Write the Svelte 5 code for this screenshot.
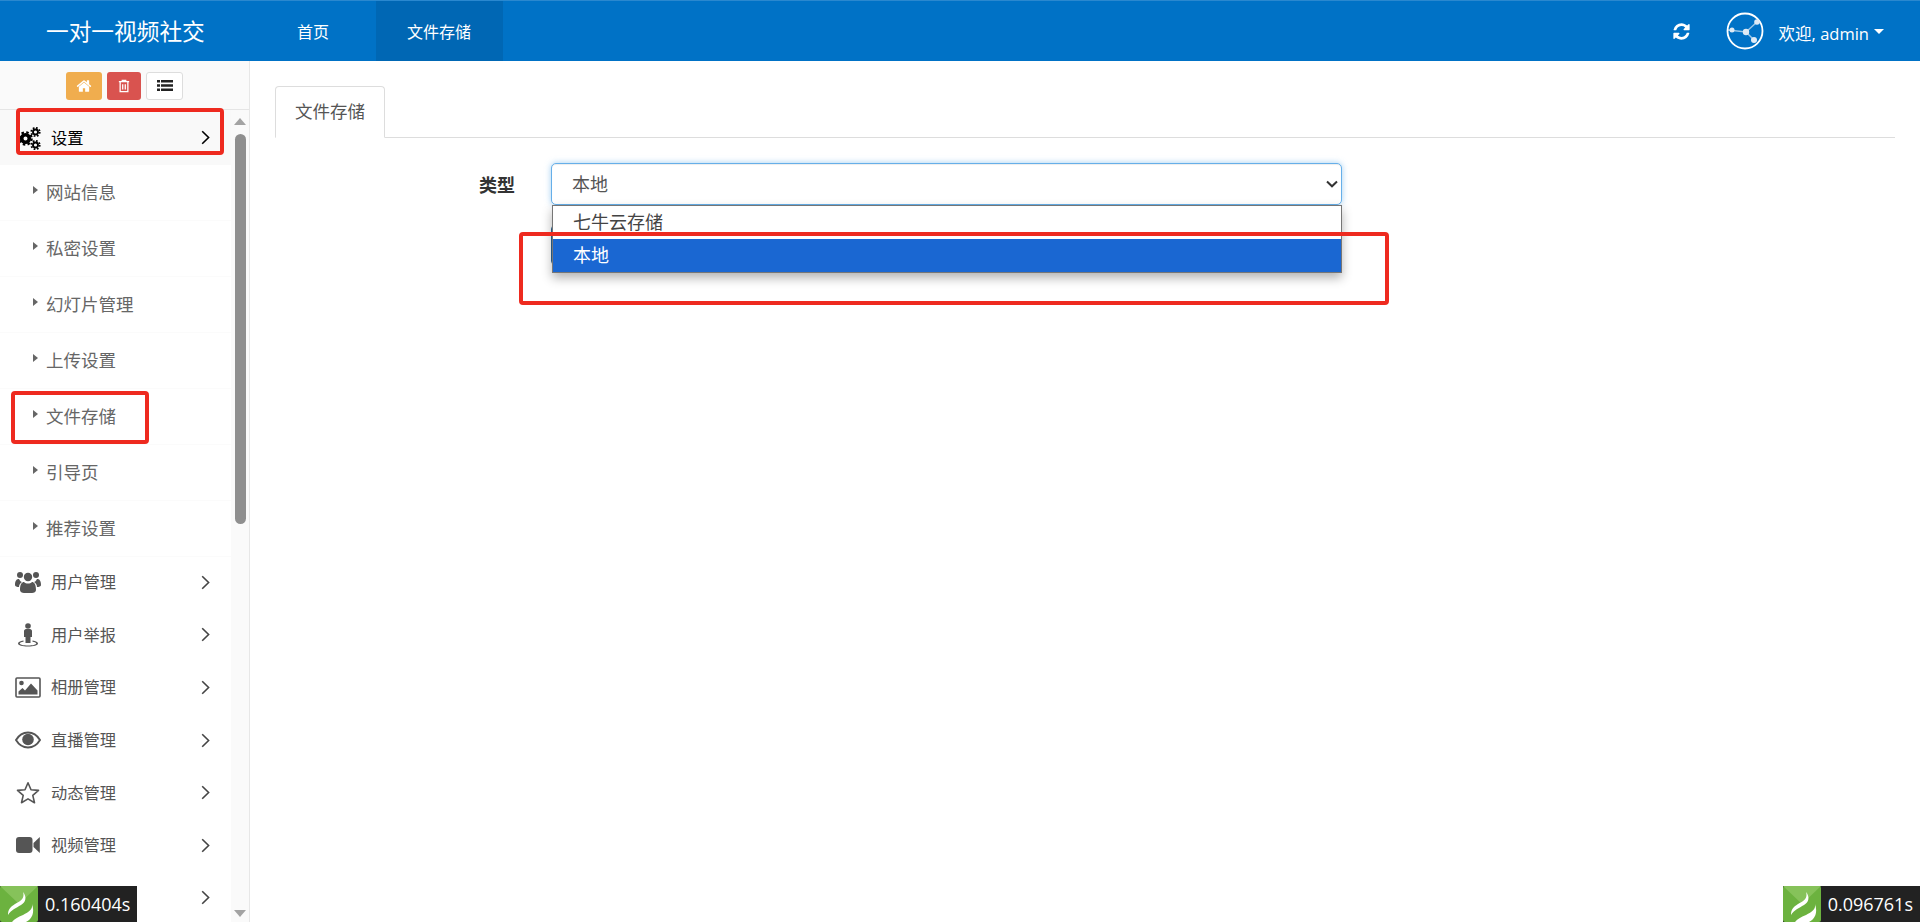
<script>
    const navLinks = [
        { label: '首页', active: false },
        { label: '文件存储', active: true },
    ];

    const subItems = ['网站信息', '私密设置', '幻灯片管理', '上传设置', '文件存储', '引导页', '推荐设置'];

    const menuItems = [
        { id: 'users', label: '用户管理' },
        { id: 'report', label: '用户举报' },
        { id: 'album', label: '相册管理' },
        { id: 'live', label: '直播管理' },
        { id: 'star', label: '动态管理' },
        { id: 'video', label: '视频管理' },
        { id: 'more', label: '' },
    ];

    const refreshPath = 'M1639 1056q0 5-1 7-64 268-268 434.500t-478 166.500q-146 0-282.500-55t-243.500-157l-129 129q-19 19-45 19t-45-19-19-45v-448q0-26 19-45t45-19h448q26 0 45 19t19 45-19 45l-137 137q71 66 161 102t187 36q134 0 250-65t186-179q11-17 53-117 8-23 30-23h192q13 0 22.500 9.500t9.500 22.500zm25-800v448q0 26-19 45t-45 19h-448q-26 0-45-19t-19-45 19-45l138-138q-148-137-349-137-134 0-250 65t-186 179q-11 17-53 117-8 23-30 23h-199q-13 0-22.500-9.500t-9.500-22.500v-7q65-268 270-434.500t480-166.500q146 0 284 55.500t245 156.500l130-129q19-19 45-19t45 19 19 45z';
    const homePath = 'M1472 992v480q0 26-19 45t-45 19h-384v-384h-256v384h-384q-26 0-45-19t-19-45v-480q0-1 .5-3t.5-3l575-474 575 474q1 2 1 6zm223-69l-62 74q-8 9-21 11h-3q-13 0-21-7l-692-577-692 577q-12 8-24 7-13-2-21-11l-62-74q-8-10-7-23.500t11-21.500l719-599q32-26 76-26t76 26l244 204v-195q0-14 9-23t23-9h192q14 0 23 9t9 23v408l219 182q10 8 11 21.500t-7 23.500z';
</script>

{#snippet chevron()}
    <svg class="chevron" viewBox="0 0 9 15" width="9" height="15"><path d="M1.200 1.200 7.600 7.500 1.200 13.800" fill="none" stroke="currentColor" stroke-width="1.600" /></svg>
{/snippet}

{#snippet flame()}
    <svg class="flame" viewBox="0 0 38 36" width="38" height="36">
        <rect width="38" height="36" rx="2" fill="#6cb23f" />
        <path d="M0 0h38L19 18z" fill="#86c25a" />
        <path d="M23 6c2 6-2 9-8 12-5 3-7 6-7 11 3-5 8-7 13-10 5-3 6-8 2-13z" fill="#fff" />
        <path d="M32 18c1 5-3 8-9 11-5 2-9 4-11 7h14c6-3 9-9 6-18z" fill="#fff" />
    </svg>
{/snippet}

<div class="page">
    <header class="navbar">
        <div class="brand">一对一视频社交</div>
        <nav class="nav-links">
            {#each navLinks as link}
                <span class="nav-link" class:active={link.active}>{link.label}</span>
            {/each}
        </nav>
        <div class="nav-right">
            <svg class="refresh" viewBox="0 0 1792 1792" width="19" height="19"><path d={refreshPath} fill="#fff" /></svg>
            <svg class="avatar" viewBox="0 0 38 38" width="38" height="38">
                <circle cx="19" cy="19" r="17.500" fill="none" stroke="#fff" stroke-width="1.800" />
                <path d="M2 18 20 20 31 10M20 20 28 28" fill="none" stroke="#fff" stroke-opacity=".6" stroke-width="1.500" />
                <circle cx="6" cy="18" r="2.500" fill="#dfeaf5" />
                <circle cx="20" cy="20" r="3.200" fill="#dfeaf5" />
                <circle cx="31" cy="10" r="2.800" fill="#dfeaf5" />
                <circle cx="28" cy="28" r="3" fill="#dfeaf5" />
            </svg>
            <span class="welcome">欢迎, admin</span>
            <span class="caret"></span>
        </div>
    </header>

    <div class="body">
        <aside class="sidebar">
            <div class="shortcuts">
                <span class="sc-btn orange">
                    <svg viewBox="0 0 1792 1792" width="16" height="16"><path d={homePath} fill="#fff" /></svg>
                </span>
                <span class="sc-btn red">
                    <svg viewBox="0 0 14 16" width="12" height="14">
                        <path d="M1 3h12M5 3V1.500h4V3M2.500 3v11.500h9V3M5.500 6v6M8.500 6v6" fill="none" stroke="#fff" stroke-width="1.500" />
                    </svg>
                </span>
                <span class="sc-btn white">
                    <svg viewBox="0 0 16 14" width="16" height="14">
                        <path d="M0 1h3v2.500H0zM4 1h12v2.500H4zM0 5.200h3v2.500H0zM4 5.200h12v2.500H4zM0 9.400h3v2.500H0zM4 9.400h12v2.500H4z" fill="#222" />
                    </svg>
                </span>
            </div>

            <div class="menu-wrap">
                <div class="menu">
                    <div class="menu-item open">
                        <span class="menu-icon">
                            <svg viewBox="0 0 26 24" width="26" height="24" fill="none" stroke="#000">
                                <circle cx="10.500" cy="12.500" r="3.800" stroke-width="3.600" />
                                <circle cx="10.500" cy="12.500" r="6.200" stroke-width="2.200" stroke-dasharray="2.500 2.370" />
                                <circle cx="20.500" cy="6" r="2.500" stroke-width="1.900" />
                                <circle cx="20.500" cy="6" r="4.200" stroke-width="1.800" stroke-dasharray="1.700 1.600" />
                                <circle cx="20.500" cy="19" r="2.500" stroke-width="1.900" />
                                <circle cx="20.500" cy="19" r="4.200" stroke-width="1.800" stroke-dasharray="1.700 1.600" />
                            </svg>
                        </span>
                        <span class="menu-label">设置</span>
                        {@render chevron()}
                    </div>

                    {#each subItems as sub}
                        <div class="sub-item">
                            <span class="sub-arrow"></span>
                            <span class="sub-label">{sub}</span>
                        </div>
                    {/each}

                    {#each menuItems as item}
                        <div class="menu-item">
                            <span class="menu-icon">
                                {#if item.id === 'users'}
                                    <svg viewBox="0 0 26 24" width="26" height="24" fill="#555">
                                        <circle cx="5" cy="5" r="3" /><circle cx="21" cy="5" r="3" /><circle cx="13" cy="7" r="4.200" />
                                        <path d="M0 15c0-5 2-6 4-6 1 2 2 3 3 3-2 1-3 3-3 5-2 0-4-.500-4-2zM26 15c0-5-2-6-4-6-1 2-2 3-3 3 2 1 3 3 3 5 2 0 4-.500 4-2z" />
                                        <path d="M5 20c0-6 2-8 4-8 2 2 6 2 8 0 2 0 4 2 4 8 0 2-2 3-4 3H9c-2 0-4-1-4-3z" />
                                    </svg>
                                {:else if item.id === 'report'}
                                    <svg viewBox="0 0 22 24" width="22" height="24" fill="#555">
                                        <circle cx="11" cy="3" r="2.800" />
                                        <path d="M7 8c0-1 1-2 2-2h4c1 0 2 1 2 2v6h-1.500v6h-5v-6H7z" />
                                        <path d="M6.500 17.500C3 18 1 19 1 20.500 1 22.500 5.500 23.500 11 23.500s10-1 10-3c0-1.500-2-2.500-5.500-3v1.300c2.500.4 3.800 1 3.800 1.700 0 1-3.500 2-8.300 2s-8.300-1-8.300-2c0-.7 1.300-1.300 3.800-1.700z" />
                                    </svg>
                                {:else if item.id === 'album'}
                                    <svg viewBox="0 0 26 21" width="26" height="21" fill="#555">
                                        <rect x="1" y="1" width="24" height="19" rx="1" fill="none" stroke="#555" stroke-width="1.600" />
                                        <circle cx="6.500" cy="6" r="2.300" />
                                        <path d="M3.500 17.500v-3l4-3.500 2.500 2.500 6-7 6.500 7v4z" />
                                    </svg>
                                {:else if item.id === 'live'}
                                    <svg viewBox="0 0 26 18" width="26" height="18" fill="#555">
                                        <path d="M1 9C4 4 8 1.500 13 1.500S22 4 25 9c-3 5-7 7.500-12 7.500S4 14 1 9z" fill="none" stroke="#555" stroke-width="1.900" />
                                        <circle cx="13" cy="8.500" r="5.800" />
                                    </svg>
                                {:else if item.id === 'star'}
                                    <svg viewBox="0 0 24 23" width="24" height="23">
                                        <path d="M12 1.800 15 8.700 22.500 9.400 16.800 14.400 18.500 21.700 12 17.900 5.500 21.700 7.200 14.400 1.500 9.400 9 8.700z" fill="none" stroke="#555" stroke-width="1.600" stroke-linejoin="round" />
                                    </svg>
                                {:else if item.id === 'video'}
                                    <svg viewBox="0 0 24 16" width="24" height="16" fill="#555">
                                        <rect x="0" y="0" width="16.500" height="16" rx="3" /><path d="M17.500 6 23.800 0v16L17.500 10z" />
                                    </svg>
                                {:else}
                                    <svg viewBox="0 0 24 20" width="24" height="20"><circle cx="12" cy="6" r="5" fill="#555" /></svg>
                                {/if}
                            </span>
                            <span class="menu-label">{item.label}</span>
                            {@render chevron()}
                        </div>
                    {/each}
                </div>

                <div class="scrollbar">
                    <span class="sb-up"></span>
                    <span class="sb-thumb"></span>
                    <span class="sb-space"></span>
                    <span class="sb-down"></span>
                </div>
            </div>
        </aside>

        <main class="content">
            <div class="tabs">
                <span class="tab">文件存储</span>
            </div>
            <div class="form-row">
                <span class="form-label">类型</span>
                <div class="field">
                    <select class="form-select">
                        <option>本地</option>
                    </select>
                    <svg class="select-arrow" viewBox="0 0 12 8" width="12" height="8"><path d="M1 1.500 6 6.300 11 1.500" fill="none" stroke="#333" stroke-width="2" /></svg>
                    <div class="behind"></div>
                    <div class="dropdown">
                        <div class="option">七牛云存储</div>
                        <div class="option selected">本地</div>
                    </div>
                </div>
            </div>
        </main>
    </div>

    <div class="mark mark-settings"></div>
    <div class="mark mark-storage"></div>
    <div class="mark mark-select"></div>

    <div class="timer timer-left">{@render flame()}<span>0.160404s</span></div>
    <div class="timer timer-right">{@render flame()}<span>0.096761s</span></div>
</div>

<style>
    :global(body) {
        margin: 0;
        background: #fff;
    }

    .page {
        position: relative;
        width: 1920px;
        height: 922px;
        overflow: hidden;
        display: flex;
        flex-direction: column;
        font-family: "Open Sans", "Noto Sans CJK SC", sans-serif;
        color: #555;
    }

    .navbar {
        height: 61px;
        flex-shrink: 0;
        box-sizing: border-box;
        border-top: 1px solid #2a88cf;
        background: #0072c6;
        color: #fff;
        display: flex;
        align-items: stretch;
    }

    .brand {
        width: 249px;
        box-sizing: border-box;
        padding-left: 46px;
        font-size: 22.700px;
        line-height: 61px;
        flex-shrink: 0;
    }

    .nav-links {
        display: flex;
    }

    .nav-link {
        padding: 0 32px 0 31px;
        font-size: 16px;
        line-height: 62px;
    }

    .nav-link:first-child {
        padding-left: 48px;
        padding-right: 47px;
    }

    .nav-link.active {
        background: #0067b4;
    }

    .nav-right {
        margin-left: auto;
        display: flex;
        align-items: center;
        padding-right: 36px;
    }

    .refresh {
        margin-right: 35px;
        margin-left: -1px;
    }

    .avatar {
        margin-right: 15px;
    }

    .welcome {
        font-size: 16.500px;
        margin-top: 3px;
    }

    .caret {
        margin-left: 5px;
        border-left: 5px solid transparent;
        border-right: 5px solid transparent;
        border-top: 5px solid #fff;
    }

    .body {
        flex: 1;
        min-height: 0;
        display: flex;
    }

    .sidebar {
        width: 250px;
        flex-shrink: 0;
        box-sizing: border-box;
        border-right: 1px solid #e7e7e7;
        display: flex;
        flex-direction: column;
    }

    .shortcuts {
        height: 49px;
        flex-shrink: 0;
        box-sizing: border-box;
        background: #fafafa;
        border-bottom: 1px solid #e5e5e5;
        padding: 11px 0 0 66px;
        display: flex;
        align-items: flex-start;
        gap: 5px;
    }

    .sc-btn {
        height: 28px;
        box-sizing: border-box;
        border-radius: 3px;
        display: flex;
        align-items: center;
        justify-content: center;
    }

    .orange {
        width: 36px;
        background: #f0ad4e;
    }

    .red {
        width: 34px;
        background: #d9534f;
    }

    .white {
        width: 37px;
        background: #fff;
        border: 1px solid #ddd;
    }

    .menu-wrap {
        flex: 1;
        min-height: 0;
        display: flex;
    }

    .menu {
        width: 231px;
        flex-shrink: 0;
        overflow: hidden;
    }

    .menu-item {
        height: 52.600px;
        box-sizing: border-box;
        padding: 0 21px 2px 15px;
        display: flex;
        align-items: center;
        font-size: 16.250px;
    }

    .menu-item.open {
        height: 55px;
        padding-bottom: 0;
        background: #f9f9f9;
        color: #000;
    }

    .menu-icon {
        width: 26px;
        margin-right: 10px;
        display: flex;
        justify-content: center;
        align-items: center;
    }

    .menu-label {
        flex: 1;
        margin-top: -2px;
    }

    .chevron {
        color: #444;
        flex-shrink: 0;
    }

    .open .chevron {
        color: #000;
    }

    .sub-item {
        height: 56px;
        box-sizing: border-box;
        border-bottom: 1px solid #fbfbfb;
        padding-left: 33px;
        display: flex;
        align-items: center;
        font-size: 17.500px;
        color: #666;
    }

    .sub-label {
        margin-top: -3px;
        margin-left: -1px;
    }

    .sub-arrow {
        margin-right: 9px;
        margin-top: -5px;
        border-top: 4px solid transparent;
        border-bottom: 4px solid transparent;
        border-left: 5px solid #666;
    }

    .scrollbar {
        flex: 1;
        background: #fafafa;
        display: flex;
        flex-direction: column;
        align-items: center;
    }

    .sb-up {
        margin-top: 8px;
        border-left: 6.500px solid transparent;
        border-right: 6.500px solid transparent;
        border-bottom: 7px solid #a3a3a3;
    }

    .sb-thumb {
        width: 11px;
        height: 390px;
        margin-top: 9px;
        border-radius: 6px;
        background: #8f8f8f;
    }

    .sb-space {
        flex: 1;
    }

    .sb-down {
        margin-bottom: 5px;
        border-left: 6.500px solid transparent;
        border-right: 6.500px solid transparent;
        border-top: 7px solid #a3a3a3;
    }

    .content {
        flex: 1;
        min-width: 0;
        padding: 25px 25px 0;
    }

    .tabs {
        height: 52px;
        box-sizing: border-box;
        border-bottom: 1px solid #ddd;
        display: flex;
    }

    .tab {
        width: 110px;
        height: 52px;
        box-sizing: border-box;
        border: 1px solid #ddd;
        border-bottom-color: #fff;
        border-radius: 4px 4px 0 0;
        background: #fff;
        font-size: 17.500px;
        line-height: 48px;
        text-align: center;
    }

    .form-row {
        margin-top: 25px;
        display: flex;
        align-items: flex-start;
    }

    .form-label {
        width: 276px;
        box-sizing: border-box;
        padding-right: 36px;
        text-align: right;
        font-size: 18px;
        font-weight: 700;
        color: #333;
        line-height: 45px;
    }

    .field {
        position: relative;
        width: 791px;
    }

    .form-select {
        display: block;
        width: 100%;
        height: 42px;
        box-sizing: border-box;
        padding: 0 20px;
        border: 1px solid #66afe9;
        border-radius: 5px;
        background-color: #fff;
        box-shadow: inset 0 1px 1px rgba(0, 0, 0, 0.075), 0 0 6px rgba(102, 175, 233, 0.6);
        font-family: inherit;
        font-size: 18px;
        color: #555;
        outline: none;
        appearance: none;
    }

    .select-arrow {
        position: absolute;
        right: 4px;
        top: 17px;
    }

    .behind {
        position: absolute;
        left: 0;
        top: 62px;
        width: 20px;
        height: 40px;
        box-sizing: border-box;
        border: 1px solid #2a6496;
        border-radius: 4px;
    }

    .dropdown {
        position: absolute;
        left: 1px;
        right: 0;
        top: 42px;
        box-sizing: border-box;
        border: 1px solid #767676;
        background: #fff;
        box-shadow: 0 5px 10px rgba(0, 0, 0, 0.3);
    }

    .option {
        height: 33px;
        padding-left: 20px;
        font-size: 18px;
        line-height: 33px;
        color: #444;
    }

    .option.selected {
        background: #1a67d2;
        color: #fff;
    }

    .mark {
        position: absolute;
        box-sizing: border-box;
        border: 4px solid #ee2a1f;
        border-radius: 4px;
    }

    .mark-settings {
        left: 16px;
        top: 108px;
        width: 208px;
        height: 47px;
    }

    .mark-storage {
        left: 11px;
        top: 391px;
        width: 138px;
        height: 53px;
    }

    .mark-select {
        left: 519px;
        top: 232px;
        width: 870px;
        height: 73px;
    }

    .timer {
        position: absolute;
        bottom: 0;
        height: 36px;
        display: flex;
        background: #222;
        color: #fff;
        font-size: 18px;
        line-height: 36px;
    }

    .timer span {
        padding: 0 7px;
    }

    .flame {
        display: block;
    }

    .timer-left {
        left: 0;
    }

    .timer-right {
        right: 0;
    }
</style>
